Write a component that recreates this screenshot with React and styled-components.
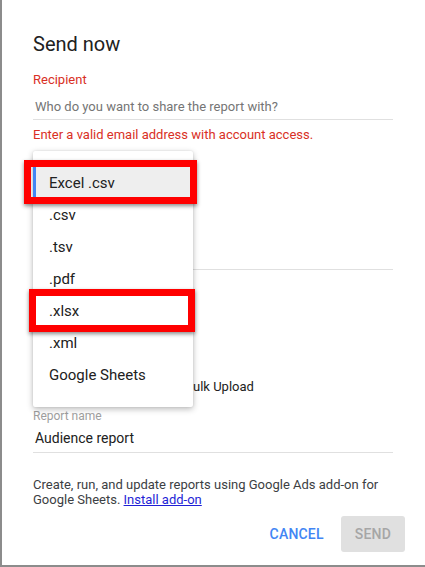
import React from 'react';
import styled, { createGlobalStyle } from 'styled-components';

const GlobalStyle = createGlobalStyle`
  html, body {
    margin: 0;
    padding: 0;
    background-color: #8c8c8c;
  }
  body {
    font-family: Roboto, 'Liberation Sans', sans-serif;
  }
`;

const Dialog = styled.div`
  position: relative;
  margin-left: 2px;
  height: 565px;
  background-color: #ffffff;
  padding: 32px 20px 0 31px;
  box-sizing: border-box;
`;

const Title = styled.h2`
  margin: 0;
  font-size: 20px;
  line-height: 24px;
  font-weight: 400;
  color: #212121;
`;

const Field = styled.div`
  width: 360px;
  margin-top: ${props => props.top || 0}px;
`;

const Label = styled.div`
  font-size: ${props => (props.error ? 13 : 12)}px;
  line-height: 16px;
  color: ${props => (props.error ? '#d93025' : '#9e9e9e')};
`;

const InputLine = styled.div`
  margin-top: ${props => props.top || 8}px;
  padding: 3px 2px ${props => (props.placeholder ? 4 : 6)}px;
  font-size: ${props => (props.placeholder ? 13 : 14)}px;
  line-height: 16px;
  color: ${props => (props.placeholder ? '#757575' : '#212121')};
  border-bottom: 1px solid #e0e0e0;
`;

const ErrorText = styled.div`
  margin-top: 7px;
  font-size: 13px;
  line-height: 16px;
  color: #d93025;
`;

const Section = styled.div`
  width: 360px;
  height: ${props => props.height}px;
  border-bottom: ${props => (props.divider ? '1px solid #e0e0e0' : 'none')};
`;

const CheckRow = styled.div`
  display: flex;
  align-items: center;
  gap: 29px;
  height: 22px;
  margin-top: 105px;
  font-size: 13px;
  color: #212121;
`;

const CheckBox = styled.span`
  width: 16px;
  height: 16px;
  border: 2px solid #757575;
  border-radius: 2px;
  box-sizing: border-box;
`;

const Note = styled.p`
  width: 360px;
  margin: 24px 0 0;
  font-size: 13px;
  line-height: 15px;
  color: #3c4043;
`;

const Link = styled.a`
  color: #1f1fd6;
  text-decoration: underline;
`;

const Actions = styled.div`
  display: flex;
  justify-content: flex-end;
  align-items: center;
  gap: 9px;
  margin-top: 9px;
`;

const Button = styled.button`
  height: 36px;
  min-width: ${props => (props.filled ? 64 : 0)}px;
  margin: 0;
  padding: 0 ${props => (props.filled ? 14 : 8)}px;
  border: none;
  border-radius: 3px;
  background-color: ${props => (props.filled ? '#e0e0e0' : 'transparent')};
  color: ${props => (props.filled ? '#a6a6a6' : '#4285f4')};
  font-family: Roboto, 'Liberation Sans', sans-serif;
  font-size: 14px;
  font-weight: 500;
  letter-spacing: 0.2px;
  text-transform: uppercase;
`;

const Menu = styled.ul`
  position: absolute;
  top: 151px;
  left: 31px;
  width: 160px;
  margin: 0;
  padding: 16px 0;
  list-style: none;
  background-color: #ffffff;
  border-radius: 2px;
  box-shadow: 0 2px 6px rgba(0, 0, 0, 0.28), 0 0 2px rgba(0, 0, 0, 0.1);
`;

const MenuItem = styled.li`
  position: relative;
  height: 32px;
  display: flex;
  align-items: center;
  padding-left: ${props => (props.active ? 13 : 16)}px;
  font-size: 15px;
  color: #212121;
  background-color: ${props => (props.active ? '#eeeeee' : 'transparent')};
  border-left: ${props => (props.active ? '3px solid #4285f4' : 'none')};
`;

const Highlight = styled.span`
  position: absolute;
  top: ${props => props.inset[0]}px;
  right: ${props => props.inset[1]}px;
  bottom: ${props => props.inset[2]}px;
  left: ${props => props.inset[3]}px;
  border: 7px solid #ff0000;
  box-shadow: 0 2px 4px rgba(0, 0, 0, 0.45);
  pointer-events: none;
`;

const formats = [
  { name: 'Excel .csv', active: true, mark: [-7, -4, -5, -12] },
  { name: '.csv' },
  { name: '.tsv' },
  { name: '.pdf' },
  { name: '.xlsx', mark: [-6, -2, -5, -4] },
  { name: '.xml' },
  { name: 'Google Sheets' },
];

const App = () => {
  return (
    <>
      <GlobalStyle />
      <Dialog>
        <Title>Send now</Title>
        <Field top={16}>
          <Label error>Recipient</Label>
          <InputLine placeholder="true">Who do you want to share the report with?</InputLine>
          <ErrorText>Enter a valid email address with account access.</ErrorText>
        </Field>
        <Section height={126} divider />
        <CheckRow>
          <CheckBox />
          <span>Google Ads Editor Bulk Upload</span>
        </CheckRow>
        <Field top={11}>
          <Label>Report name</Label>
          <InputLine top={3}>Audience report</InputLine>
        </Field>
        <Note>
          Create, run, and update reports using Google Ads add-on for Google Sheets.{' '}
          <Link href="#">Install add-on</Link>
        </Note>
        <Actions>
          <Button>Cancel</Button>
          <Button filled>Send</Button>
        </Actions>
        <Menu>
          {formats.map(f => (
            <MenuItem key={f.name} active={f.active}>
              {f.name}
              {f.mark && <Highlight inset={f.mark} />}
            </MenuItem>
          ))}
        </Menu>
      </Dialog>
    </>
  );
};

export default App;
